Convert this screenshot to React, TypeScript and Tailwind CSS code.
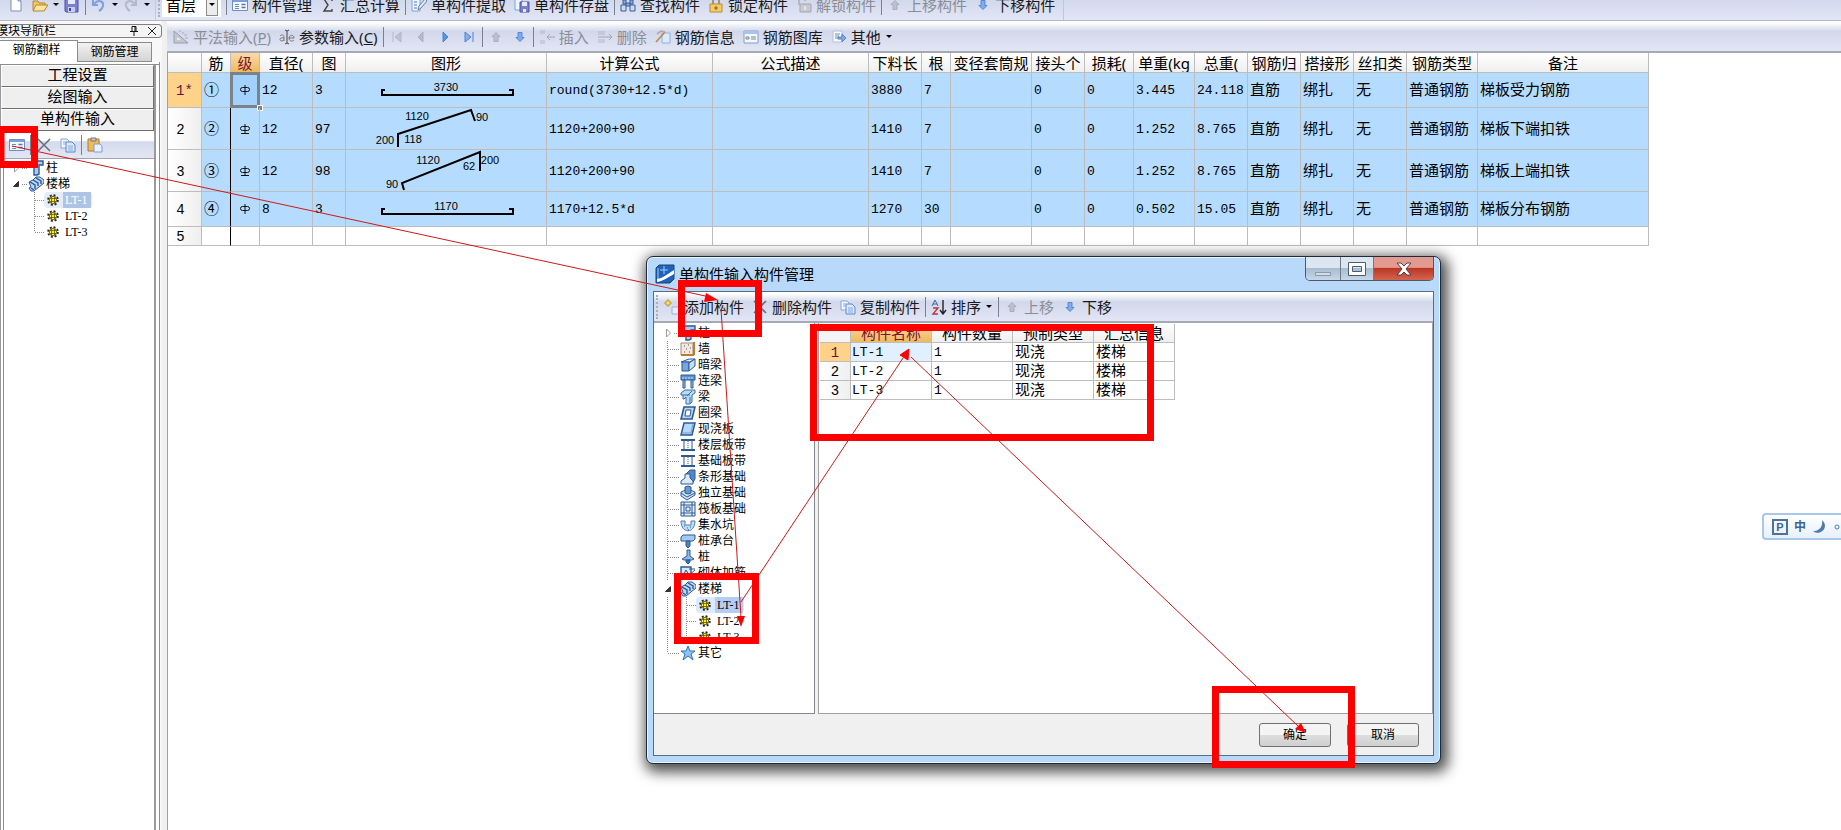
import clsx from 'clsx';
import type { ReactNode } from 'react';

const steel = '#2c5a94';
const sky = '#9cc4ee';

const icons: Record<string, ReactNode> = {
  newFile: (
    <path d="M3 1h7l3 3v10H3z M10 1v3h3" fill="#fff" stroke="#7d8fb3" />
  ),
  open: (
    <>
      <path d="M1 13V4h5l1 2h6v7z" fill="#f0c767" stroke="#b9862c" />
      <path d="M1 14l3-6h12l-4 6z" fill="#fbe3a2" stroke="#b9862c" />
    </>
  ),
  save: (
    <>
      <path d="M1 2h13v13H2l-1-1z" fill="#7b7fd0" stroke="#4d519e" />
      <path d="M4 2h7v5H4z" fill="#e6e9fa" />
      <path d="M4 10h7v5H4z" fill="#c9cdf0" />
      <path d="M5 11h2v3H5z" fill="#3f4390" />
    </>
  ),
  undo: (
    <path d="M2 3v5h5 M3 7c4-5 10-3 9 2-.5 2-2 4-4 5" stroke="#7f9fdd" strokeWidth="2" />
  ),
  redo: (
    <path d="M13 3v5H8 M12 7C8 2 2 4 3 9c.5 2 2 4 4 5" stroke="#b3b9c6" strokeWidth="2" />
  ),
  manage: (
    <>
      <path d="M.5 2.500h15v11H.5z" fill="#f5f9ff" stroke="#6d8fc4" />
      <path d="M1 3h14v2H1z" fill="#7ba1dc" />
      <path d="M3 7.500h4M3 9.500h4M3 11.500h4" stroke="#6a8cc2" />
      <path d="M9.500 7.500h4M9.500 10.500h4" stroke="#5377b0" strokeWidth="1.6" />
    </>
  ),
  sigma: <path d="M12 4V2H4l4 6-4 6h8v-2" stroke="#444" strokeWidth="1.4" />,
  extract: (
    <>
      <path d="M1 2h8v12H1z" fill="#edf4ff" stroke="#7da2d8" />
      <path d="M3 5h3M3 8h3M3 11h3" stroke="#4d7bc0" />
      <path d="M7 13l1-4 6-7 2 2-6 7z" fill="#dfeaf8" stroke="#69809f" />
    </>
  ),
  store: (
    <>
      <path d="M1 2h7v11H1z" fill="#edf4ff" stroke="#7da2d8" />
      <path d="M6 5h9v10H6z" fill="#7b7fd0" stroke="#4d519e" />
      <path d="M8 5h5v4H8z M9 12h3v3H9z" fill="#e6e9fa" />
    </>
  ),
  find: (
    <>
      <path d="M3 3h3v4H3zM10 3h3v4h-3zM6 6h4v3H6z" fill="#8eaede" stroke="#3a5c96" />
      <path d="M1 8h5v6H1zM10 8h5v6h-5z" fill="#c9daf3" stroke="#3a5c96" />
    </>
  ),
  lock: (
    <>
      <path d="M5 7V4c0-4 6-4 6 0v3" stroke="#a2947a" strokeWidth="2" />
      <path d="M2 7h12v8H2z" fill="#f3cb67" stroke="#b98d31" />
      <path d="M8 9v4M6 11h4" stroke="#7e6020" />
    </>
  ),
  unlock: (
    <>
      <path d="M3 8V4c0-4 6-4 6 0" stroke="#b5b8c2" strokeWidth="2" />
      <path d="M4 7h11v8H4z" fill="#c8cad3" stroke="#a3a6b2" />
      <path d="M9 9v4" stroke="#fff" />
    </>
  ),
  up: <path d="M8 3.500l4 4h-2v5H6v-5H4z" fill="#bcc0ca" stroke="#a9adba" />,
  down: <path d="M8 12.500l4-4h-2v-5H6v5H4z" fill="#7fabf2" stroke="#5a86d2" />,
  ruler: (
    <>
      <path d="M1 2v12h14z" fill="#c3c7d2" stroke="#9a9fae" />
      <path d="M4 8v3h4z" fill="#e9ebf2" />
      <path d="M6 2h2M9 4h2M11 6h3M12 9h3" stroke="#a7abb8" />
    </>
  ),
  param: (
    <>
      <path d="M1 7c2-2 4-1 4 1v4M5 9c-5-1-5 3-2 3l2-1" stroke="#777" />
      <path d="M10 9h5c0-4-5-3-5 0s3 4 5 2" stroke="#777" />
      <path d="M6 1l2 1 2-1M8 2v12M6 15l2-1 2 1" stroke="#444" />
    </>
  ),
  first: <path d="M4 3v10M12 3v10L6 8z" fill="#bcc1cf" stroke="#b3b8c6" />,
  prev: <path d="M10 3v10L5 8z" fill="#b5bac8" stroke="#abb1c0" />,
  next: <path d="M6 3v10l5-5z" fill="#5b92ea" stroke="#4d80d6" />,
  last: <path d="M12 3v10M4 3v10l6-5z" fill="#86aeee" stroke="#4d80d6" />,
  insertRow: (
    <>
      <path d="M1 2h5M1 4h5M1 12h5M1 14h5" stroke="#b4b8c2" />
      <path d="M16 8H8M11 5L8 8l3 3" stroke="#a2a6b1" />
    </>
  ),
  deleteRow: (
    <>
      <path d="M1 3h7M1 5h7M1 11h7M1 13h7" stroke="#b4b8c2" />
      <path d="M1 8h14M12 5l3 3-3 3" stroke="#a2a6b1" />
    </>
  ),
  barInfo: (
    <>
      <path d="M7 4h8v10H7z" fill="#dcebfc" stroke="#8fb0de" />
      <path d="M1 13L10 3" stroke="#b98a48" strokeWidth="1.6" />
      <path d="M2 5l4-3 4 1" stroke="#b5ab98" strokeWidth="1.6" />
    </>
  ),
  barLib: (
    <>
      <path d="M1 2h14v12H1z" fill="#f3f7fe" stroke="#7e9ccc" />
      <path d="M1 2h14v3H1z" fill="#a9c3ea" />
      <path d="M3 8h3v2H3zM8 8h5M8 10h5" stroke="#80858f" />
    </>
  ),
  other: (
    <>
      <path d="M2 2h9v11H2z" fill="#f6f9ff" stroke="#b3c1d9" />
      <path d="M4 5h5M4 7h4M4 9h3" stroke="#7a8cac" />
      <path d="M7 8h4V5l4 4-4 4v-3H7z" fill="#7fabec" stroke="#5b83c4" />
    </>
  ),
  remove: <path d="M2 2l12 12M14 2L2 14" stroke="#6c6f78" strokeWidth="1.6" />,
  copy: (
    <>
      <path d="M1 2h6l2 2v7H1z" fill="#f2f7ff" stroke="#82a5dc" />
      <path d="M6 5h6l3 3v7H6z" fill="#dbe9fc" stroke="#5e88c8" />
      <path d="M3 5h3M3 7h3M8 9h5M8 11h5M8 13h5" stroke="#86a9dc" />
    </>
  ),
  paste: (
    <>
      <path d="M1 2h11v12H1z" fill="#eebb58" stroke="#a87d2d" />
      <path d="M4 1h5v3H4z" fill="#c5c8cf" stroke="#777" />
      <path d="M7 7h6l2 2v6H7z" fill="#eaf2fe" stroke="#7f9fce" />
    </>
  ),
  add: (
    <>
      <path d="M8 8h7v7H8z" fill="#e6eefb" stroke="#96afd6" />
      <path d="M3 1h2v2h2v2H5v2H3V5H1V3h2z" fill="#f8e37c" stroke="#c29a2d" />
    </>
  ),
  sort: (
    <>
      <path d="M1 7l3-6 3 6M2 5h4" stroke="#3b64a8" />
      <path d="M2 9h5l-5 6h5" stroke="#b03b3b" strokeWidth="1.4" />
      <path d="M12 1v13M9 11l3 4 3-4" stroke="#222" strokeWidth="1.4" />
    </>
  ),
  column: (
    <path d="M1 4l3-3h11v4h-4v9l-2 1H6V6H1z" fill="#a9cbf2" stroke={steel} strokeWidth="1.4" />
  ),
  stairs: (
    <>
      <path d="M1 6l4-2 3-3h4l4 3v3L6 15H3l-2-3 2-1z" fill="#bcd8f8" stroke={steel} />
      <path d="M2 6l5 3v4M5 4l5 3v3M8 2l5 3v3M3 12l3 2" stroke={steel} strokeWidth="1.4" />
    </>
  ),
  wall: (
    <>
      <path d="M1 2h12v12H1z" fill="#f1e8df" stroke="#a18b7c" />
      <path d="M14 1v13M1 14h13" stroke="#c07a2c" strokeWidth="2" />
      <path d="M4 5h1M8 4h1M6 8h1M10 7h1M4 11h1M9 11h1" stroke="#64504a" />
    </>
  ),
  hiddenBeam: (
    <>
      <path d="M1 5l8-3h6l-5 3z" fill="#e1effe" stroke={steel} />
      <path d="M2 5h7v9H2z" fill="#7aa5da" stroke={steel} />
      <path d="M9 6l6-4v7l-6 5z" fill="#c7dff8" stroke={steel} />
    </>
  ),
  linkBeam: (
    <>
      <path d="M1 2h14v5H1z" fill="#5a8fd2" stroke={steel} />
      <path d="M3 7h2v8H3zM11 7h2v8h-2z" fill={sky} stroke={steel} />
      <path d="M2 5h12" stroke="#d9e9fb" strokeDasharray="2 1" />
    </>
  ),
  beam: (
    <path d="M1 4l4-3h10v3l-3 2v7l-2 2H6V8L4 10H3V6H1zM3 6h7M7 7l5-5M10 8v7" fill="#b9daf8" stroke="#37719f" />
  ),
  ringBeam: (
    <>
      <path d="M4 2h11l-3 12H1z" fill="#b7d5f6" stroke={steel} strokeWidth="1.6" />
      <path d="M6 5h5l-1 6H5z" fill="#fff" stroke={steel} />
    </>
  ),
  slab: (
    <>
      <path d="M4 2h11l-3 12H1z" fill="#b7d8fb" stroke={steel} strokeWidth="1.5" />
      <path d="M2 12h9l2-9" stroke="#6e9ed6" />
    </>
  ),
  band: (
    <>
      <path d="M1 3h14M1 13h14" stroke={steel} strokeWidth="2" />
      <path d="M4 4v8M12 4v8" stroke={steel} />
      <path d="M8 4v8" stroke={steel} strokeDasharray="1 1" />
    </>
  ),
  strip: (
    <>
      <path d="M6 5l4-4h5v9l-3 5" fill="#5787c2" stroke={steel} />
      <path d="M5 5h5v4l3 3v3H1v-3l4-3z" fill="#dbeafb" stroke={steel} />
    </>
  ),
  isolated: (
    <>
      <path d="M1 7l7-3 7 3v3l-8 5-6-4z" fill="#cfe3fa" stroke={steel} />
      <path d="M5 2l3-1 3 1v6l-3 1-3-1z" fill="#6798d2" stroke={steel} />
      <path d="M1 8l6 4 8-4" stroke={steel} />
    </>
  ),
  raft: (
    <path d="M1 1h14v14H1zM4 1v14M12 1v14M1 4h14M1 12h14M6 6h4v4H6z" fill="#e3effc" stroke={steel} />
  ),
  pit: (
    <>
      <path d="M1 4h4v4h6V4h4c0 13-14 13-14 0z" fill="#bfddf9" stroke="#4a7eb8" />
      <path d="M4 9h1M7 11h1M10 10h1M8 13h1" stroke={steel} />
    </>
  ),
  cap: (
    <>
      <path d="M1 4l2-2h12v4l-2 2H1z" fill="#a4c8f0" stroke={steel} />
      <path d="M6 8h4v5l-2 2-2-2z" fill="#4f84c4" stroke={steel} />
    </>
  ),
  pile: (
    <>
      <path d="M7 1h3v6l4 3-2 1H4l-2-1 5-3z" fill="#8fb8e6" stroke={steel} />
      <path d="M6 11h4v2l-2 2-2-2z" fill="#3d73b6" stroke={steel} />
    </>
  ),
  masonry: (
    <>
      <path d="M1 2h10v11H1z" fill="#d8e8fb" stroke={steel} strokeWidth="1.4" />
      <path d="M3 11l3-6 3 5 6-5M9 4h6M9 11h6" stroke={steel} />
    </>
  ),
  star: (
    <path d="M8 1l2 5h5l-4 3 2 6-5-4-5 4 2-6-4-3h5z" fill="#8cc4f5" stroke="#2f74b8" />
  ),
  gear: (
    <>
      <circle cx="8" cy="8" r="6.500" stroke="#222" strokeWidth="2.400" strokeDasharray="2.600 2.500" />
      <circle cx="8" cy="8" r="5" fill="#f7ec3c" stroke="#3b3508" />
      <path d="M6 4v8M10 4v8M4 6h8M4 10h8" stroke="#5b5208" />
    </>
  ),
};

const Icon = ({ name }: { name: string }) => (
  <svg
    viewBox="0 0 16 16"
    className={clsx('shrink-0', name === 'gear' ? 'h-3 w-3' : 'h-4 w-4')}
    fill="none"
  >
    {icons[name]}
  </svg>
);

const Caret = () => (
  <svg viewBox="0 0 8 4" className="h-1 w-2 shrink-0">
    <path d="M1 0h6L4 3z" />
  </svg>
);

const Sep = () => <span className="mx-px h-5 w-px shrink-0 bg-[#7b8090]" />;

const Grip = () => (
  <span className="mx-0.5 h-6 w-0.5 shrink-0 border-l-2 border-dotted border-[#a9afc2]" />
);

type ToolProps = {
  icon: string;
  label?: ReactNode;
  title?: string;
  disabled?: boolean;
  menu?: boolean;
};

const Tool = ({ icon, label, title, disabled, menu }: ToolProps) => (
  <button
    type="button"
    disabled={disabled}
    aria-label={title}
    className={clsx(
      'flex shrink-0 items-center gap-1 px-1 text-[15px] leading-5 whitespace-nowrap',
      disabled ? 'text-[#8b8d96]' : 'text-[#1a1a1a]',
    )}
  >
    <Icon name={icon} />
    {label && <span>{label}</span>}
    {menu && <Caret />}
  </button>
);

const TopBar = () => (
  <header className="flex h-[21px] items-end overflow-hidden border-b border-[#b4b8c8] bg-linear-to-b from-[#d2d9ec] to-[#e2e6f6]">
    <div className="flex h-[30px] w-[156px] shrink-0 items-center border-r border-[#c6cbdc] pl-1">
      <Tool icon="newFile" title="新建" />
      <Tool icon="open" title="打开" />
      <Caret />
      <Tool icon="save" title="保存" />
      <Sep />
      <Tool icon="undo" title="撤销" />
      <Caret />
      <Tool icon="redo" title="恢复" disabled />
      <Caret />
    </div>
    <div className="flex h-[30px] items-center border-r border-[#c0c6d8] pr-1">
      <Grip />
      <span className="mr-1 flex h-6 w-[59px] items-center bg-white">
        <select
          aria-label="楼层"
          className="h-6 w-11 appearance-none pl-1 text-[15px] leading-5"
        >
          <option>首层</option>
        </select>
        <span className="flex h-[22px] w-3 items-center justify-center border border-[#8c8c8c] bg-[#ececec]">
          <Caret />
        </span>
      </span>
      <Sep />
      <Tool icon="manage" label="构件管理" />
      <Tool icon="sigma" label="汇总计算" />
      <Sep />
      <Tool icon="extract" label="单构件提取" />
      <Tool icon="store" label="单构件存盘" />
      <Sep />
      <Tool icon="find" label="查找构件" />
      <Tool icon="lock" label="锁定构件" />
      <Tool icon="unlock" label="解锁构件" disabled />
      <Sep />
      <Tool icon="up" label="上移构件" disabled />
      <Tool icon="down" label="下移构件" />
    </div>
  </header>
);

type Node = {
  icon: string;
  label: string;
  level?: number;
  arrow?: 'closed' | 'open';
  state?: 'dim' | 'active';
};

const sideNodes: Node[] = [
  { icon: 'column', label: '柱', arrow: 'closed' },
  { icon: 'stairs', label: '楼梯', arrow: 'open' },
  { icon: 'gear', label: 'LT-1', level: 1, state: 'dim' },
  { icon: 'gear', label: 'LT-2', level: 1 },
  { icon: 'gear', label: 'LT-3', level: 1 },
];

const dialogNodes: Node[] = [
  { icon: 'column', label: '柱', arrow: 'closed' },
  { icon: 'wall', label: '墙' },
  { icon: 'hiddenBeam', label: '暗梁' },
  { icon: 'linkBeam', label: '连梁' },
  { icon: 'beam', label: '梁' },
  { icon: 'ringBeam', label: '圈梁' },
  { icon: 'slab', label: '现浇板' },
  { icon: 'band', label: '楼层板带' },
  { icon: 'band', label: '基础板带' },
  { icon: 'strip', label: '条形基础' },
  { icon: 'isolated', label: '独立基础' },
  { icon: 'raft', label: '筏板基础' },
  { icon: 'pit', label: '集水坑' },
  { icon: 'cap', label: '桩承台' },
  { icon: 'pile', label: '桩' },
  { icon: 'masonry', label: '砌体加筋' },
  { icon: 'stairs', label: '楼梯', arrow: 'open' },
  { icon: 'gear', label: 'LT-1', level: 1, state: 'active' },
  { icon: 'gear', label: 'LT-2', level: 1 },
  { icon: 'gear', label: 'LT-3', level: 1 },
  { icon: 'star', label: '其它' },
];

const Branch = ({ node, rail }: { node: Node; rail?: boolean }) => (
  <svg
    viewBox="0 0 20 16"
    className="h-4 w-5 shrink-0"
    fill="none"
    stroke="#8a8a8a"
    strokeDasharray="1 1"
  >
    {!node.level && <path d={node.arrow ? 'M14 8.500h6' : 'M8 8.500h12'} />}
    {rail && !node.arrow && (
      <path d={node.icon === 'star' ? 'M7.500 0v8' : 'M7.500 0v16'} />
    )}
    {node.arrow === 'closed' && (
      <path d="M6.500 4v8l4-4z" fill="#fff" stroke="#999" strokeDasharray="none" />
    )}
    {node.arrow === 'open' && (
      <path d="M10.500 5.500v5h-5z" fill="#333" stroke="#333" strokeDasharray="none" />
    )}
  </svg>
);

const Tree = ({ nodes, rail }: { nodes: Node[]; rail?: boolean }) => (
  <ul className="text-xs leading-4">
    {nodes.map((node) => (
      <li key={node.label} className="flex h-4 items-center">
        <Branch node={node} rail={rail} />
        {node.level && (
          <svg
            viewBox="0 0 16 16"
            className="h-4 w-4 shrink-0"
            fill="none"
            stroke="#8a8a8a"
            strokeDasharray="1 1"
          >
            <path
              d={node.label === 'LT-3' ? 'M6.500 0v8M7 8.500h9' : 'M6.500 0v16M7 8.500h9'}
            />
          </svg>
        )}
        <button
          type="button"
          className={clsx(
            'flex h-4 items-center whitespace-nowrap',
            node.level ? 'gap-1 rounded-sm border border-transparent pl-0.5' : 'gap-0.5',
            node.state === 'dim' && 'border-[#d3dbe8] bg-[#e6ecf5]',
            node.state === 'active' && 'border-[#8db4e3] bg-[#dceafc]',
          )}
        >
          <Icon name={node.icon} />
          <span
            className={clsx(
              node.level && 'pr-1 pl-0.5 font-[Liberation_Serif,serif]',
              node.state === 'dim' && 'bg-[#adc4e4] text-white',
              node.state === 'active' && 'bg-[#b3cdf3]',
            )}
          >
            {node.label}
          </span>
        </button>
      </li>
    ))}
  </ul>
);

const Sidebar = () => (
  <aside className="flex w-[162px] shrink-0 flex-col bg-[#f8f8f8] pt-[3px]">
    <div className="flex h-3.5 items-center overflow-hidden rounded-r-sm border border-l-0 border-[#808080] bg-[#f4f4f4] text-xs leading-3">
      <h2 className="-ml-1 flex-1 whitespace-nowrap">模块导航栏</h2>
      <button type="button" aria-label="固定" className="px-1">
        <svg viewBox="0 0 10 10" className="h-2.5 w-2.5" stroke="#111" fill="none">
          <path d="M3 .5h4v5M3 .5v5M1 5.500h8M5 6v4M6 1v4" />
        </svg>
      </button>
      <button type="button" aria-label="关闭" className="px-1">
        <svg viewBox="0 0 10 10" className="h-2.5 w-2.5" stroke="#222">
          <path d="M1 1l8 8M9 1L1 9" />
        </svg>
      </button>
    </div>
    <div role="tablist" className="mt-0.5 flex h-[22px] items-end text-xs">
      <button
        type="button"
        role="tab"
        aria-selected
        className="h-[22px] w-[78px] border-t border-r border-[#8c8c8c] bg-white pr-1 pb-1"
      >
        钢筋翻样
      </button>
      <button
        type="button"
        role="tab"
        className="h-5 w-[74px] border border-l-0 border-[#8c8c8c] bg-linear-to-b from-[#f2f2f2] to-[#d4d4d4]"
      >
        钢筋管理
      </button>
    </div>
    <div className="flex w-40 flex-1 flex-col border-r border-[#8c8c8c] bg-white">
      <div className="h-[3px] border-b border-[#8c8c8c]" />
      <div className="flex w-[156px] flex-1 flex-col border-r-2 border-l border-[#9a9a9e]">
        {['工程设置', '绘图输入', '单构件输入'].map((label) => (
          <button
            type="button"
            key={label}
            className="h-[22px] border border-[#707070] border-t-white border-l-white bg-[#efefef] pb-1 text-[15px] leading-4"
          >
            {label}
          </button>
        ))}
        <div className="flex h-7 items-center border-b border-[#a0a4b0] bg-linear-to-b from-white from-35% via-[#d4daec] via-40% to-[#e3e7f5] pl-1">
          <Tool icon="manage" title="构件管理" />
          <Sep />
          <Tool icon="remove" title="删除" />
          <Tool icon="copy" title="复制" />
          <Sep />
          <Tool icon="paste" title="粘贴" />
        </div>
        <div className="ml-0.5 flex-1 border-l border-[#8c8c8c] pt-px pl-1">
          <Tree nodes={sideNodes} />
        </div>
      </div>
    </div>
  </aside>
);

const EditBar = () => (
  <div className="flex h-8 items-center border-b-2 border-[#a6a8b4] bg-linear-to-b from-white from-5% via-[#d2d8eb] via-35% to-[#e2e6f5] pt-0.5 pl-0.5">
    <Tool icon="ruler" label={<>平法输入(<u>P</u>)</>} disabled />
    <Tool icon="param" label={<>参数输入(<u>C</u>)</>} />
    <Sep />
    <Tool icon="first" title="首行" disabled />
    <Tool icon="prev" title="上一行" disabled />
    <Tool icon="next" title="下一行" />
    <Tool icon="last" title="末行" />
    <Sep />
    <Tool icon="up" title="上移" disabled />
    <Tool icon="down" title="下移" />
    <Sep />
    <Tool icon="insertRow" label="插入" disabled />
    <Tool icon="deleteRow" label="删除" disabled />
    <Tool icon="barInfo" label="钢筋信息" />
    <Tool icon="barLib" label="钢筋图库" />
    <Tool icon="other" label="其他" menu />
  </div>
);

const columns: [string, string][] = [
  ['', 'w-[34px]'],
  ['筋', 'w-[29px]'],
  ['级', 'w-[29px]'],
  ['直径(', 'w-[53px]'],
  ['图', 'w-[33px]'],
  ['图形', 'w-[201px]'],
  ['计算公式', 'w-[166px]'],
  ['公式描述', 'w-[156px]'],
  ['下料长', 'w-[53px]'],
  ['根', 'w-[29px]'],
  ['变径套筒规', 'w-[81px]'],
  ['接头个', 'w-[53px]'],
  ['损耗(', 'w-[49px]'],
  ['单重(kg', 'w-[61px]'],
  ['总重(', 'w-[53px]'],
  ['钢筋归', 'w-[53px]'],
  ['搭接形', 'w-[53px]'],
  ['丝扣类', 'w-[53px]'],
  ['钢筋类型', 'w-[71px]'],
  ['备注', 'w-[171px]'],
];

type Bar = {
  no: string;
  mark: string;
  ribbed: boolean;
  height: string;
  h: number;
  path: string;
  labels: [number, number, string][];
  left: string[];
  right: string[];
};

const straight = 'M39 17h-3v5h131v-5h-4';

const bars: Bar[] = [
  {
    no: '1*',
    mark: '①',
    ribbed: false,
    height: 'h-[35px]',
    h: 34,
    path: straight,
    labels: [[100, 18, '3730']],
    left: ['12', '3'],
    right: ['round(3730+12.5*d)', '', '3880', '7', '', '0', '0', '3.445', '24.118', '直筋', '绑扎', '无', '普通钢筋', '梯板受力钢筋'],
  },
  {
    no: '2',
    mark: '②',
    ribbed: true,
    height: 'h-[42px]',
    h: 41,
    path: 'M52 39V26L125 2l4 11',
    labels: [
      [71, 12, '1120'],
      [136, 13, '90'],
      [39, 36, '200'],
      [67, 35, '118'],
    ],
    left: ['12', '97'],
    right: ['1120+200+90', '', '1410', '7', '', '0', '0', '1.252', '8.765', '直筋', '绑扎', '无', '普通钢筋', '梯板下端扣铁'],
  },
  {
    no: '3',
    mark: '③',
    ribbed: true,
    height: 'h-[42px]',
    h: 41,
    path: 'M58 40l-2-7 78-31v19',
    labels: [
      [82, 14, '1120'],
      [123, 20, '62'],
      [144, 14, '200'],
      [46, 38, '90'],
    ],
    left: ['12', '98'],
    right: ['1120+200+90', '', '1410', '7', '', '0', '0', '1.252', '8.765', '直筋', '绑扎', '无', '普通钢筋', '梯板上端扣铁'],
  },
  {
    no: '4',
    mark: '④',
    ribbed: false,
    height: 'h-[35px]',
    h: 34,
    path: straight,
    labels: [[100, 18, '1170']],
    left: ['8', '3'],
    right: ['1170+12.5*d', '', '1270', '30', '', '0', '0', '0.502', '15.05', '直筋', '绑扎', '无', '普通钢筋', '梯板分布钢筋'],
  },
];

const isLatin = (text: string) => /^[\x20-\x7e]*$/.test(text);

const Cell = ({ text }: { text: string }) => (
  <td
    className={clsx(
      'overflow-hidden border-r border-b border-[#bdbdbd] pl-0.5',
      isLatin(text)
        ? 'pt-0.5 font-[Liberation_Mono,monospace] text-[13px]'
        : 'pb-0.5 text-[15px]',
    )}
  >
    {text}
  </td>
);

const Grade = ({ ribbed }: { ribbed: boolean }) => (
  <svg viewBox="0 0 12 12" className="mx-auto h-3 w-3" fill="none" stroke="#111">
    <rect x="1.500" y="3.500" width="9" height="4" rx="2" />
    <path d="M6 1v10" />
    {ribbed && <path d="M2 10.500h8" />}
  </svg>
);

const BarTable = () => (
  <table className="w-[1481px] table-fixed border-separate border-spacing-0 leading-4 whitespace-nowrap">
    <thead>
      <tr className="h-5">
        {columns.map(([title, width]) => (
          <th
            key={title}
            className={clsx(
              width,
              'overflow-hidden border-r border-b border-[#bdbdbd] text-[15px] font-normal',
              title === '级'
                ? 'bg-linear-to-b from-[#f9dba8] to-[#f0b95c] text-[#7a1530]'
                : 'bg-linear-to-b from-white to-[#efefef]',
            )}
          >
            {title}
          </th>
        ))}
      </tr>
    </thead>
    <tbody>
      {bars.map((bar, i) => (
        <tr key={bar.no} className={clsx(bar.height, 'bg-[#b5dcfe]')}>
          <th
            className={clsx(
              'border-r border-b border-[#bdbdbd] pt-0.5 font-[Liberation_Mono,monospace] text-sm leading-4 font-normal',
              i === 0
                ? 'bg-[#ffd28a] text-[#6b1040]'
                : 'bg-linear-to-r from-white to-[#efefef] pr-2',
            )}
          >
            {bar.no}
          </th>
          <td
            className={clsx(
              'border-r border-b border-b-[#bdbdbd] pb-0.5 pl-0.5 text-[15px]',
              i === 0 ? 'border-r-[#bdbdbd]' : 'border-r-black',
            )}
          >
            {bar.mark}
          </td>
          <td
            className={clsx(
              'relative border-r border-b border-[#bdbdbd]',
              i === 0 && 'bg-[#a3d1fd]',
            )}
          >
            <Grade ribbed={bar.ribbed} />
            {i === 0 && (
              <>
                <span className="absolute -inset-px border-3 border-[#7b8288]" />
                <span className="absolute -right-1 -bottom-1 h-1.5 w-1.5 border border-white bg-[#7b8288]" />
              </>
            )}
          </td>
          {bar.left.map((text, n) => (
            <Cell key={n} text={text} />
          ))}
          <td className="border-r border-b border-[#bdbdbd] p-0">
            <svg
              viewBox={`0 0 200 ${bar.h}`}
              width="200"
              height={bar.h}
              className="block font-[Liberation_Sans,sans-serif] text-[11px]"
            >
              <path d={bar.path} fill="none" stroke="#000" strokeWidth="2" />
              {bar.labels.map(([x, y, text]) => (
                <text key={text} x={x} y={y} textAnchor="middle">
                  {text}
                </text>
              ))}
            </svg>
          </td>
          {bar.right.map((text, n) => (
            <Cell key={n} text={text} />
          ))}
        </tr>
      ))}
      <tr className="h-[19px] bg-white">
        <th className="border-r border-b border-[#bdbdbd] bg-linear-to-r from-white to-[#efefef] pt-0.5 pr-2 font-[Liberation_Mono,monospace] text-sm leading-4 font-normal">
          5
        </th>
        <td className="border-r border-b border-r-black border-b-[#bdbdbd]" />
        {columns.slice(2).map(([title]) => (
          <td key={title} className="border-r border-b border-[#bdbdbd]" />
        ))}
      </tr>
    </tbody>
  </table>
);

const MemberTable = () => (
  <table className="w-[355px] table-fixed border-separate border-spacing-0 text-[15px] leading-4 whitespace-nowrap">
    <thead>
      <tr className="h-[19px]">
        <th className="w-[31px] border-r border-b border-[#bdbdbd] bg-[#f4f4f4]" />
        {['构件名称', '构件数量', '预制类型', '汇总信息'].map((title, i) => (
          <th
            key={title}
            className={clsx(
              'border-r border-b border-[#bdbdbd] font-normal',
              i === 0
                ? 'bg-linear-to-b from-[#f9dba8] to-[#f0b95c] text-[#7a1530]'
                : 'bg-linear-to-b from-white to-[#efefef]',
            )}
          >
            {title}
          </th>
        ))}
      </tr>
    </thead>
    <tbody>
      {['LT-1', 'LT-2', 'LT-3'].map((name, i) => (
        <tr key={name} className="h-[19px]">
          <th
            className={clsx(
              'border-r border-b border-[#bdbdbd] pt-0.5 font-[Liberation_Mono,monospace] text-sm leading-4 font-normal',
              i === 0
                ? 'bg-[#ffd28a] text-[#6b1040]'
                : 'bg-linear-to-r from-white to-[#efefef]',
            )}
          >
            {i + 1}
          </th>
          <td
            className={clsx(
              'border-r border-b border-[#bdbdbd] pt-0.5 pl-px font-[Liberation_Mono,monospace] text-[13px]',
              i === 0 && 'bg-[#e1f0fe]',
            )}
          >
            {name}
          </td>
          <Cell text="1" />
          <Cell text="现浇" />
          <Cell text="楼梯" />
        </tr>
      ))}
    </tbody>
  </table>
);

const WindowButtons = () => (
  <div className="flex h-6 overflow-hidden rounded-b-[5px] border border-t-0 border-[#4c5968]">
    <button
      type="button"
      aria-label="最小化"
      className="flex w-[35px] items-center justify-center border-r border-[#6d7a8a] bg-linear-to-b from-[#dbe6f1] from-50% via-[#a9bdd1] via-50% to-[#c5d7e8]"
    >
      <span className="mt-2.5 h-1 w-4 border border-[#8a9bae] bg-[#cfdbe7]" />
    </button>
    <button
      type="button"
      aria-label="最大化"
      className="flex w-[33px] items-center justify-center border-r border-[#6d7a8a] bg-linear-to-b from-[#dbe6f1] from-50% via-[#a9bdd1] via-50% to-[#c5d7e8]"
    >
      <svg viewBox="0 0 18 14" className="h-3.5 w-[18px]">
        <path d="M.5.5h17v13H.5zM4.500 4.500v5h9v-5z" fill="#fff" fillRule="evenodd" stroke="#4f5c6c" />
      </svg>
    </button>
    <button
      type="button"
      aria-label="关闭"
      className="flex w-[59px] items-center justify-center bg-linear-to-b from-[#e39a90] from-45% via-[#bb3524] via-50% to-[#d4644f]"
    >
      <svg viewBox="0 0 16 14" className="h-3.5 w-4">
        <path
          d="M1 1h4l3 3 3-3h4l-5 6 5 6h-4l-3-3-3 3H1l5-6z"
          fill="#fff"
          stroke="#5a3d40"
        />
      </svg>
    </button>
  </div>
);

const ManagerDialog = () => (
  <section
    role="dialog"
    aria-label="单构件输入构件管理"
    className="absolute top-64 left-[646px] flex h-[508px] w-[795px] flex-col rounded-[7px] border border-[#1d2b3a] bg-[#b9d9fb] px-1.5 pb-[7px] shadow-[3px_4px_14px_4px_rgba(0,0,0,0.7)] inset-ring inset-ring-white/70"
  >
    <div className="flex h-[34px] shrink-0 items-start">
      <div className="flex h-[34px] flex-1 items-center gap-1 pl-0.5 text-[15px] leading-5">
        <svg viewBox="0 0 20 20" className="h-5 w-5">
          <path d="M4 1h15v14l-4 4H1V4z" fill="#1f62b8" stroke="#15457f" />
          <path d="M5 6h8M9 2v8M3 4v14" stroke="#9fd0ff" />
          <path d="M2 15C8 14 11 11 19 6v4C12 14 8 17 2 18z" fill="#fff" />
        </svg>
        <h1>单构件输入构件管理</h1>
      </div>
      <WindowButtons />
    </div>
    <div className="flex min-h-0 flex-1 flex-col border border-[#5d6c7e] bg-[#f0f0f0]">
      <div className="flex h-[31px] shrink-0 items-center border-b-2 border-[#a6a8b4] bg-linear-to-b from-white from-5% via-[#d2d8eb] via-35% to-[#e2e6f5]">
        <Grip />
        <Tool icon="add" label="添加构件" />
        <Tool icon="remove" label="删除构件" />
        <Tool icon="copy" label="复制构件" />
        <Sep />
        <Tool icon="sort" label="排序" menu />
        <Sep />
        <Tool icon="up" label="上移" disabled />
        <Tool icon="down" label="下移" />
      </div>
      <div className="flex min-h-0 flex-1 gap-[3px]">
        <div className="w-[161px] border-r border-b border-[#828790] bg-white pt-0.5 pl-1.5">
          <Tree nodes={dialogNodes} rail />
        </div>
        <div className="flex-1 border border-t-0 border-[#a0a0a0] bg-white pt-px pl-px">
          <MemberTable />
        </div>
      </div>
      <div className="flex h-[41px] shrink-0 items-center justify-end gap-4 pr-3.5">
        {['确定', '取消'].map((label) => (
          <button
            type="button"
            key={label}
            className="h-6 w-[72px] rounded-[3px] border border-[#707070] bg-linear-to-b from-[#f4f4f4] from-50% via-[#dedede] via-50% to-[#cfcfcf] text-xs"
          >
            {label}
          </button>
        ))}
      </div>
    </div>
  </section>
);

const ImeBar = () => (
  <div className="absolute top-[513px] right-0 flex h-[27px] w-[79px] items-center gap-1.5 overflow-hidden rounded-l-sm border-2 border-r-0 border-[#a9c8ea] bg-linear-to-b from-white to-[#e6f0fb] pl-2 text-xs text-[#3c6494]">
    <span className="flex h-4 w-4 shrink-0 items-center justify-center border-2 border-[#4a739f] font-[Liberation_Sans,sans-serif] text-[11px] leading-3 font-bold">
      P
    </span>
    <span className="font-bold">中</span>
    <svg viewBox="0 0 16 16" className="h-4 w-4 shrink-0">
      <path d="M10 1c8 7-2 17-9 11 7 0 10-5 9-11z" fill="#4c7bb0" />
    </svg>
    <svg viewBox="0 0 6 6" className="h-1.5 w-1.5 shrink-0" fill="none" stroke="#4c7bb0">
      <circle cx="3" cy="3" r="2" />
    </svg>
  </div>
);

// Walkthrough marks: boxes round the controls, arrows in click order
const Marks = () => (
  <div className="pointer-events-none absolute inset-0 overflow-hidden">
    <svg
      viewBox="0 0 1841 830"
      width="1841"
      height="830"
      className="absolute top-0 left-0"
      fill="none"
    >
      <g stroke="#d01818">
        <path d="M12 146L710 297M721 309l20 308M741 602L903 358M911 357l388 370" />
      </g>
      <g fill="#f00">
        <path d="M718 300l-12-7-2 9z" />
        <path d="M741 627l-4-11h8z" />
        <path d="M909 349l-9 6 8 5z" stroke="#f00" />
        <path d="M1306 733l-11-4 6-6z" />
      </g>
      <g stroke="#f00" strokeWidth="7">
        <path d="M1 129.500h33.500v35H1zM0 126v42" />
        <path d="M681.500 283.500h77v50h-77z" />
        <path d="M813.500 327.500h337v110h-337z" />
        <path d="M677.500 576.500h78v64h-78z" />
        <path d="M1215.500 689.500h136v75h-136z" />
      </g>
    </svg>
  </div>
);

const App = () => (
  <div className="relative flex min-h-screen flex-col overflow-hidden bg-white font-[Noto_Sans,Noto_Sans_CJK_SC,sans-serif] text-black">
    <TopBar />
    <div className="flex flex-1">
      <Sidebar />
      <div className="w-[5px] shrink-0 bg-[#f0f0f0]" />
      <main className="flex min-w-0 flex-1 flex-col">
        <EditBar />
        <div className="flex-1 border-l border-[#a0a0a0]">
          <BarTable />
        </div>
      </main>
    </div>
    <ManagerDialog />
    <ImeBar />
    <Marks />
  </div>
);

export default App;
